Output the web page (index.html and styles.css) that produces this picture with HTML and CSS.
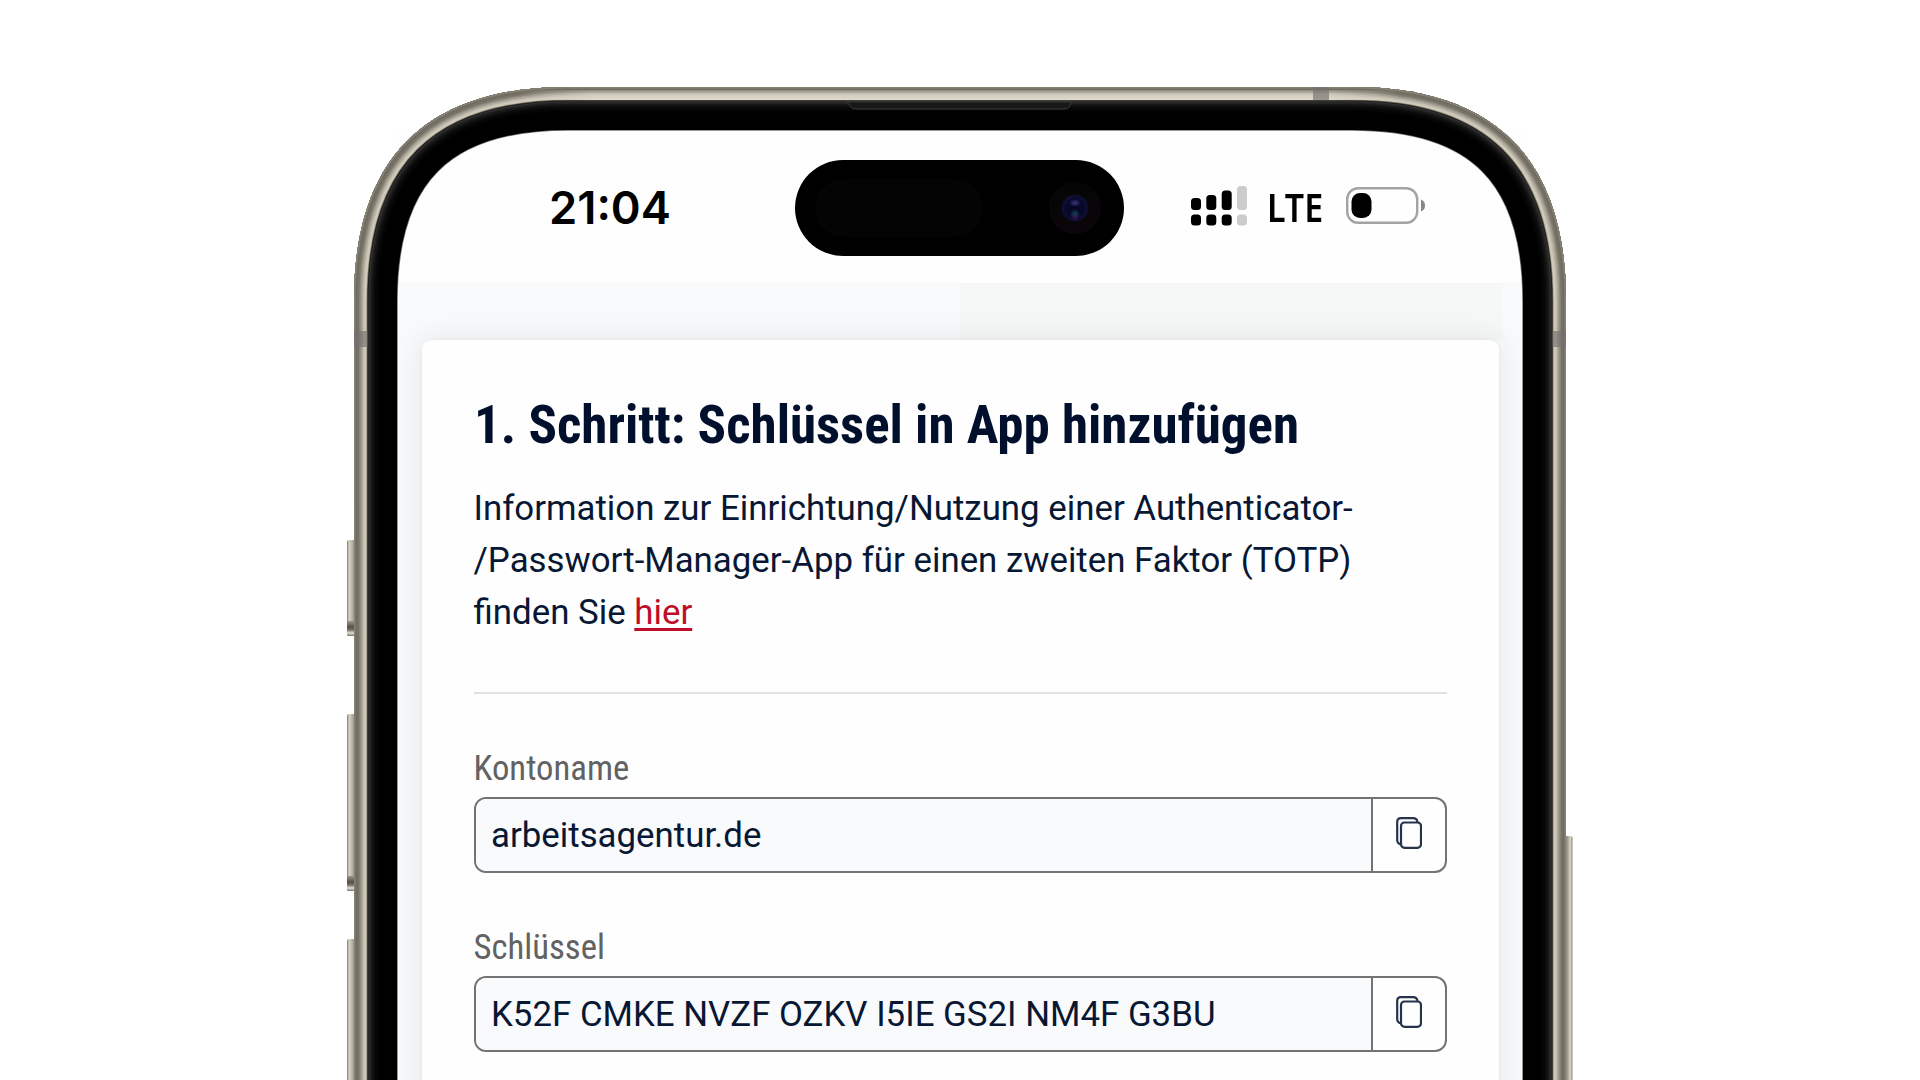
FILE: index.html
```html
<!DOCTYPE html>
<html lang="de">
<head>
<meta charset="utf-8">
<title>Schlüssel in App hinzufügen</title>
<link rel="stylesheet" href="styles.css">
</head>
<body>
<main class="stage">
  <div class="screen">
    <header class="status">
      <span class="time">21:04</span>
      <div class="island">
        <span class="sensor"></span>
        <svg class="lens" viewBox="0 0 52 52" aria-hidden="true">
          <defs>
            <linearGradient id="ring" x1="0" y1="0" x2="0" y2="1"><stop offset="0" stop-color="#050505"/><stop offset="1" stop-color="#0c050b"/></linearGradient>
            <radialGradient id="glass"><stop offset="0" stop-color="#060620"/><stop offset=".65" stop-color="#08082c"/><stop offset=".85" stop-color="#101034"/><stop offset="1" stop-color="#08080f"/></radialGradient>
            <radialGradient id="glow"><stop offset="0" stop-color="#3c3b7c"/><stop offset="1" stop-color="#3c3b7c" stop-opacity="0"/></radialGradient>
            <radialGradient id="teal"><stop offset="0" stop-color="#17485a"/><stop offset="1" stop-color="#17485a" stop-opacity="0"/></radialGradient>
            <radialGradient id="violet"><stop offset="0" stop-color="#3d1558"/><stop offset="1" stop-color="#3d1558" stop-opacity="0"/></radialGradient>
          </defs>
          <circle cx="26" cy="26" r="26" fill="url(#ring)"/>
          <circle cx="26" cy="26" r="14" fill="url(#glass)"/>
          <ellipse cx="26" cy="21" rx="6" ry="4" fill="url(#glow)"/>
          <circle cx="26" cy="32" r="5" fill="url(#teal)"/>
          <circle cx="26" cy="35" r="4" fill="url(#violet)"/>
        </svg>
      </div>
      <div class="indicators">
        <svg class="signal" viewBox="0 0 56 40" aria-hidden="true">
          <g fill="#000"><rect x="0" y="12" width="10" height="12" rx="3.500"/><rect x="15.300" y="9" width="10" height="15" rx="3.500"/><rect x="30.700" y="4.500" width="10" height="19.500" rx="3.500"/><rect x="0" y="28.500" width="10" height="11" rx="3.500"/><rect x="15.300" y="28.500" width="10" height="11" rx="3.500"/><rect x="30.700" y="28.500" width="10" height="11" rx="3.500"/></g>
          <g fill="#ccc"><rect x="46" y="0" width="10" height="24" rx="3.500"/><rect x="46" y="28.500" width="10" height="11" rx="3.500"/></g>
        </svg>
        <span class="network">LTE</span>
        <svg class="battery" viewBox="0 0 80 38" aria-hidden="true">
          <rect x="1.200" y="1.200" width="70" height="34.600" rx="11" fill="none" stroke="#a3a3a3" stroke-width="2.400"/>
          <rect x="5.500" y="6" width="20" height="25" rx="8.500"/>
          <path d="M75 12.500Q79 14 79 18.500T75 24.500Z" fill="#888"/>
        </svg>
      </div>
    </header>
    <section class="page">
      <article class="card">
        <h1 class="title">1. Schritt: Schlüssel in App hinzufügen</h1>
        <p class="info">Information zur Einrichtung/Nutzung einer Authenticator-<br>/Passwort-Manager-App für einen zweiten Faktor (TOTP)<br>finden Sie <a class="link">hier</a></p>
        <hr class="rule">
        <div class="field">
          <div class="label">Kontoname</div>
          <div class="box"><span class="value">arbeitsagentur.de</span><span class="copy"><svg viewBox="0 0 26 32" aria-hidden="true"><path d="M5 27.500Q1.200 26.500 1.200 23V5Q1.200 1.200 5 1.200H17Q21 1.200 21.500 5"/><rect x="5" y="5.500" width="20" height="25.300" rx="3.500"/></svg></span></div>
        </div>
        <div class="field">
          <div class="label">Schlüssel</div>
          <div class="box"><span class="value">K52F CMKE NVZF OZKV I5IE GS2I NM4F G3BU</span><span class="copy"><svg viewBox="0 0 26 32" aria-hidden="true"><path d="M5 27.500Q1.200 26.500 1.200 23V5Q1.200 1.200 5 1.200H17Q21 1.200 21.500 5"/><rect x="5" y="5.500" width="20" height="25.300" rx="3.500"/></svg></span></div>
        </div>
      </article>
    </section>
  </div>
  <svg class="frame" viewBox="0 0 1920 1080" aria-hidden="true">
    <defs>
      <path id="body" d="M354 1300V301C354 158.500 425.500 87 568 87H1352C1494.500 87 1566 158.500 1566 301V1300Z"/>
      <clipPath id="shell"><use href="#body"/></clipPath>
      <linearGradient id="btn" x1="0" x2="1" y1="0" y2="0"><stop offset="0" stop-color="#77736a"/><stop offset=".22" stop-color="#d9d4c6"/><stop offset=".6" stop-color="#b5b0a2"/><stop offset="1" stop-color="#777267"/></linearGradient>
      <linearGradient id="btnr" x1="1" x2="0" y1="0" y2="0"><stop offset="0" stop-color="#85817a"/><stop offset=".25" stop-color="#d9d4c6"/><stop offset=".6" stop-color="#a09b8e"/><stop offset="1" stop-color="#777267"/></linearGradient>
      <linearGradient id="foot" x1="0" y1="0" x2="0" y2="1"><stop offset="0" stop-color="#9c978b"/><stop offset=".4" stop-color="#555047"/><stop offset=".6" stop-color="#777267"/><stop offset=".8" stop-color="#e4dfd2"/><stop offset="1" stop-color="#77736a"/></linearGradient>
      <linearGradient id="shine" x1="0" y1="0" x2="0" y2="1"><stop offset="0" stop-color="#8d887c"/><stop offset=".3" stop-color="#bbb6a8"/><stop offset=".45" stop-color="#d0cbbd"/><stop offset="1" stop-color="#dfdacb"/></linearGradient>
      <linearGradient id="fade" x1="0" y1="0" x2="1" y2="0"><stop offset="0" stop-color="#000"/><stop offset=".08" stop-color="#fff"/><stop offset=".92" stop-color="#fff"/><stop offset="1" stop-color="#000"/></linearGradient>
      <mask id="ends"><rect x="520" y="80" width="880" height="30" fill="url(#fade)"/></mask>
    </defs>
    <g>
      <rect x="347" y="540" width="9" height="96" rx="2" fill="url(#btn)"/><rect x="347" y="621" width="8" height="15" rx="1" fill="url(#foot)"/>
      <rect x="347" y="714" width="9" height="177" rx="2" fill="url(#btn)"/><rect x="347" y="876" width="8" height="15" rx="1" fill="url(#foot)"/>
      <rect x="347" y="939" width="9" height="200" rx="2" fill="url(#btn)"/>
      <rect x="1564" y="836" width="8.500" height="300" rx="2" fill="url(#btnr)"/>
    </g>
    <g clip-path="url(#shell)" fill="none">
      <use href="#body" stroke="#777" stroke-width="87.500"/>
      <use href="#body" stroke="#000" stroke-width="86"/>
      <use href="#body" stroke="#050505" stroke-width="48"/>
      <use href="#body" stroke="#0c0c0c" stroke-width="42"/>
      <use href="#body" stroke="#161616" stroke-width="38"/>
      <use href="#body" stroke="#232323" stroke-width="34"/>
      <use href="#body" stroke="#303030" stroke-width="31"/>
      <use href="#body" stroke="#1b1916" stroke-width="28.500"/>
      <use href="#body" stroke="#6b6559" stroke-width="27"/>
      <use href="#body" stroke="#c4bfb0" stroke-width="25.500"/>
      <use href="#body" stroke="#cfcabb" stroke-width="24"/>
      <use href="#body" stroke="#c1bcad" stroke-width="20.500"/>
      <use href="#body" stroke="#b0ab9d" stroke-width="18"/>
      <use href="#body" stroke="#9e998c" stroke-width="15.500"/>
      <use href="#body" stroke="#8a8579" stroke-width="13"/>
      <use href="#body" stroke="#797468" stroke-width="10.500"/>
      <use href="#body" stroke="#716c61" stroke-width="7"/>
      <use href="#body" stroke="#878276" stroke-width="3"/>
      <rect x="520" y="90" width="880" height="10" fill="url(#shine)" mask="url(#ends)"/>
      <g fill="#777070" fill-opacity=".65"><rect x="354" y="331" width="13.500" height="16"/><rect x="1552.500" y="331" width="13.500" height="16"/><rect x="1313" y="87" width="16" height="13"/></g>
      <path d="M847 102L851 107Q852 109 856 109H1064Q1068 109 1069 107L1072 102Z" fill="#161816" stroke="#383a38"/>
    </g>
  </svg>
</main>
</body>
</html>
```
FILE: styles.css
```css
* { box-sizing: border-box; }
body { margin: 0; background: #fff; font-family: Roboto, "Liberation Sans", sans-serif; color: #081733; }
.stage { position: relative; width: 1920px; height: 1080px; overflow: hidden; padding: 130px 397px 0; }
.frame { position: absolute; inset: 0; width: 1920px; height: 1080px; }
.screen { width: 1126px; height: 950px; background: #fefefe; overflow: hidden; }

.status { height: 153px; display: grid; grid-template-columns: 398px 329px 1fr; align-items: start; padding-top: 29px; }
.time { justify-self: start; margin-left: 152px; padding-top: 21px; font: 600 45.300px/56px Inter, sans-serif; color: #000; white-space: nowrap; }
.island { height: 96px; margin-top: .5px; border-radius: 48px; background: #000; display: flex; align-items: center; justify-content: space-between; padding: 0 23px 0 20px; }
.sensor { width: 168px; height: 58px; border-radius: 29px; background: #040404; }
.lens { width: 52px; height: 52px; }
.indicators { display: flex; align-items: flex-start; padding-left: 67px; }
.signal { width: 56px; height: 40px; margin-top: 27px; }
.network { width: 54px; margin: 22px 0 0 20px; font: 600 39px/52px "Noto Sans", sans-serif; color: #000; transform: scaleX(.87); transform-origin: 0 0; }
.battery { width: 80px; height: 38px; margin: 28px 0 0 25px; }

.page { height: 797px; padding: 57px 24.500px 0 25px; background: linear-gradient(90deg, #f9fafc 0 563px, #f6f8f8 563px 1106px, #f9fafc 1106px) 0 0 / 100% 57px no-repeat, #f9fafc; }
.card { height: 900px; padding: 52px; background: #fefefe; border-radius: 9px; box-shadow: 0 0 32px rgba(30, 35, 40, .1), 0 0 3px rgba(30, 40, 45, .06); }
.title { margin: 0; height: 68px; font: 700 53px/66px "Roboto Condensed", Roboto, sans-serif; color: #000f2b; white-space: nowrap; }
.info { margin: 23px 0 0 -.5px; font-size: 34.850px; line-height: 52px; white-space: nowrap; }
.link { color: #c00c26; text-decoration: underline; text-decoration-thickness: 2.500px; text-underline-offset: 4px; }
.rule { height: 2px; margin: 53px 0 0; border: 0; background: #dfe1e5; }
.field { margin-top: 48px; }
.label { height: 55px; margin-left: -.5px; font: 400 34.700px/52px "Roboto Condensed", Roboto, sans-serif; color: #626262; }
.box { display: grid; grid-template-columns: 1fr 74px; height: 76px; border: 2px solid #737373; border-radius: 12px; background: #fefefe; overflow: hidden; }
.value { padding-left: 15px; font-size: 34.850px; line-height: 73px; background: #f9fafc; white-space: nowrap; }
.copy { border-left: 2px solid #737373; padding: 18px 0 0 23px; }
.copy svg { display: block; width: 26px; height: 32px; fill: none; stroke: #26334d; stroke-width: 2.200; }
```
